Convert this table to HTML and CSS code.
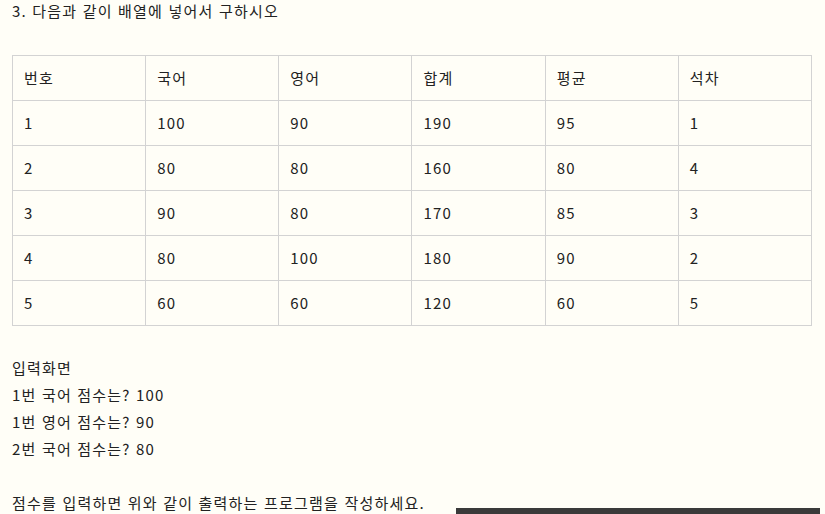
FILE: index.html
```html
<!DOCTYPE html>
<html lang="ko">

<head>
    <meta charset="UTF-8">
    <meta name="viewport" content="width=device-width, initial-scale=1.0">
    <title>배열 문제</title>
    <link rel="stylesheet" href="styles.css">
</head>

<body>
    <div class="content">
        <p class="question">3. 다음과 같이 배열에 넣어서 구하시오</p>
        <table class="score-table">
            <thead>
                <tr>
                    <th>번호</th>
                    <th>국어</th>
                    <th>영어</th>
                    <th>합계</th>
                    <th>평균</th>
                    <th>석차</th>
                </tr>
            </thead>
            <tbody>
                <tr><td>1</td><td>100</td><td>90</td><td>190</td><td>95</td><td>1</td></tr>
                <tr><td>2</td><td>80</td><td>80</td><td>160</td><td>80</td><td>4</td></tr>
                <tr><td>3</td><td>90</td><td>80</td><td>170</td><td>85</td><td>3</td></tr>
                <tr><td>4</td><td>80</td><td>100</td><td>180</td><td>90</td><td>2</td></tr>
                <tr><td>5</td><td>60</td><td>60</td><td>120</td><td>60</td><td>5</td></tr>
            </tbody>
        </table>
        <p class="input-screen">
            입력화면<br>
            1번 국어 점수는? 100<br>
            1번 영어 점수는? 90<br>
            2번 국어 점수는? 80
        </p>
        <p class="task">점수를 입력하면 위와 같이 출력하는 프로그램을 작성하세요.</p>
    </div>
    <div class="bottom-bar"></div>
</body>

</html>
```

FILE: styles.css
```css
body {
    margin: 0;
    padding: 0;
    background-color: #fffef7;
    font-family: "Noto Sans CJK KR", "Noto Sans", sans-serif;
    font-size: 15px;
    letter-spacing: 1.2px;
    color: #222;
    line-height: 27px;
}

.content {
    padding: 0 12px;
    margin-top: -3px;
}

.question {
    margin: 0 0 31px 0;
}

.score-table {
    width: 800px;
    border-collapse: collapse;
    table-layout: fixed;
}

.score-table th,
.score-table td {
    height: 44px;
    padding: 0 11px;
    border: 1px solid #d3d3d3;
    text-align: left;
    font-weight: normal;
    line-height: 20px;
    vertical-align: middle;
}

.input-screen {
    margin: 28px 0 27px 0;
}

.task {
    margin: 0;
}

.bottom-bar {
    position: fixed;
    left: 456px;
    bottom: 0;
    width: 364px;
    height: 6px;
    background-color: #3a3a3a;
}
```
